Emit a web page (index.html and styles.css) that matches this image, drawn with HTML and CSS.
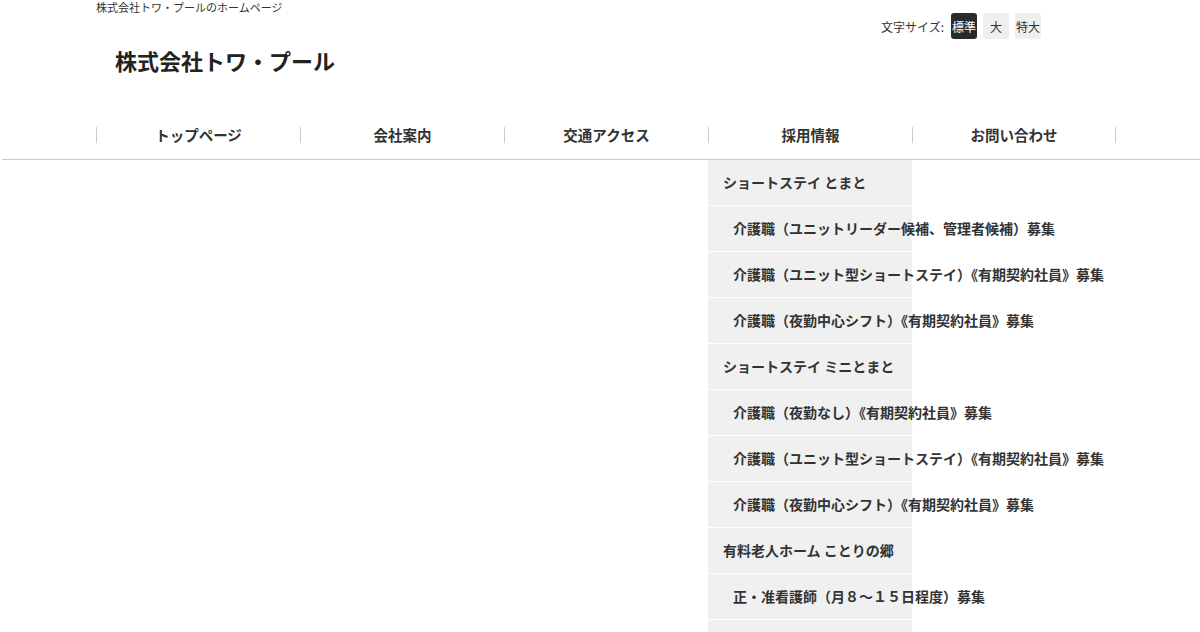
FILE: index.html
```html
<!DOCTYPE html>
<html lang="ja">
<head>
<meta charset="UTF-8">
<meta name="viewport" content="width=device-width, initial-scale=1.0">
<title>株式会社トワ・プール</title>
<link rel="stylesheet" href="styles.css">
</head>
<body>

<header class="site-header">
  <div class="wrap">
    <p class="tagline">株式会社トワ・プールのホームページ</p>
    <div class="header-main">
      <h1 class="logo"><a href="#">株式会社トワ・プール</a></h1>
      <div class="font-size">
        <span class="font-size-label">文字サイズ:</span>
        <button class="fs-btn active">標準</button>
        <button class="fs-btn">大</button>
        <button class="fs-btn">特大</button>
      </div>
    </div>
  </div>
</header>

<nav class="global-nav">
  <div class="wrap">
    <ul class="menu">
      <li><a href="#">トップページ</a></li>
      <li><a href="#">会社案内</a></li>
      <li><a href="#">交通アクセス</a></li>
      <li class="has-sub">
        <a href="#">採用情報</a>
        <ul class="sub-menu">
          <li><a href="#">ショートステイ とまと</a></li>
          <li class="child"><a href="#">介護職（ユニットリーダー候補、管理者候補）募集</a></li>
          <li class="child"><a href="#">介護職（ユニット型ショートステイ）《有期契約社員》募集</a></li>
          <li class="child"><a href="#">介護職（夜勤中心シフト）《有期契約社員》募集</a></li>
          <li><a href="#">ショートステイ ミニとまと</a></li>
          <li class="child"><a href="#">介護職（夜勤なし）《有期契約社員》募集</a></li>
          <li class="child"><a href="#">介護職（ユニット型ショートステイ）《有期契約社員》募集</a></li>
          <li class="child"><a href="#">介護職（夜勤中心シフト）《有期契約社員》募集</a></li>
          <li><a href="#">有料老人ホーム ことりの郷</a></li>
          <li class="child"><a href="#">正・准看護師（月８〜１５日程度）募集</a></li>
          <li class="child"><a href="#">介護職募集</a></li>
        </ul>
      </li>
      <li><a href="#">お問い合わせ</a></li>
    </ul>
  </div>
</nav>

<main class="content"></main>

</body>
</html>
```

FILE: styles.css
```css
body {
  font-family: "Noto Sans CJK JP", "Noto Sans", sans-serif;
  margin: 0; padding: 0;
  background: #fff;
  color: #333;
}
a {
  color: #333;
  text-decoration: none;
}
ul {
  list-style: none;
  margin: 0; padding: 0;
}
.wrap {
  width: 1032px;
  margin: 0 auto;
  padding-left: 12px;
  box-sizing: border-box;
}

/* header */
.tagline {
  margin: 0;
  font-size: 11px;
  line-height: 15px;
  color: #333;
}
.header-main {
  display: flex;
  justify-content: space-between;
  align-items: flex-start;
  height: 98px;
}
.logo {
  margin: 26px 0 0 19px;
  font-size: 22px;
  line-height: 38px;
  font-weight: bold;
}
.logo a { color: #222; }
.font-size {
  display: flex;
  align-items: center;
  gap: 6px;
  margin: -2px 75px 0 0;
}
.font-size-label {
  font-size: 12px;
  margin-right: 1px;
}
.fs-btn {
  font-family: inherit;
  width: 26px;
  height: 26px;
  padding: 0;
  border: none;
  border-radius: 3px;
  background: #efefef;
  color: #333;
  font-size: 12px;
  cursor: pointer;
}
.fs-btn.active {
  background: #2b2b2b;
  color: #fff;
}

/* global navigation */
.global-nav {
  margin-left: 2px;
  border-bottom: 1px solid #ccc;
  position: relative;
  z-index: 5;
}
.global-nav .wrap {
  margin-left: calc(50% - 517px);
}
.menu {
  display: flex;
  width: 1020px;
}
.menu > li {
  width: 204px;
  height: 46px;
  display: flex;
  align-items: center;
  position: relative;
}
.menu > li > a {
  flex: 1;
  text-align: center;
  font-size: 14.5px;
  font-weight: bold;
  line-height: 16px;
  margin-top: -2px;
  border-left: 1px solid #ccc;
}
.menu > li:last-child > a {
  border-right: 1px solid #ccc;
}

/* dropdown under 採用情報 */
.sub-menu {
  position: absolute;
  top: 47px;
  left: 0;
  width: 204px;
  background: #f0f0f0;
}
.sub-menu li {
  border-bottom: 1px solid #fff;
}
.sub-menu li a {
  display: block;
  height: 45px;
  line-height: 45px;
  padding-left: 15px;
  font-size: 14px;
  font-weight: bold;
  white-space: nowrap;
}
.sub-menu li.child a {
  padding-left: 25px;
}

.content {
  min-height: 520px;
}
```
